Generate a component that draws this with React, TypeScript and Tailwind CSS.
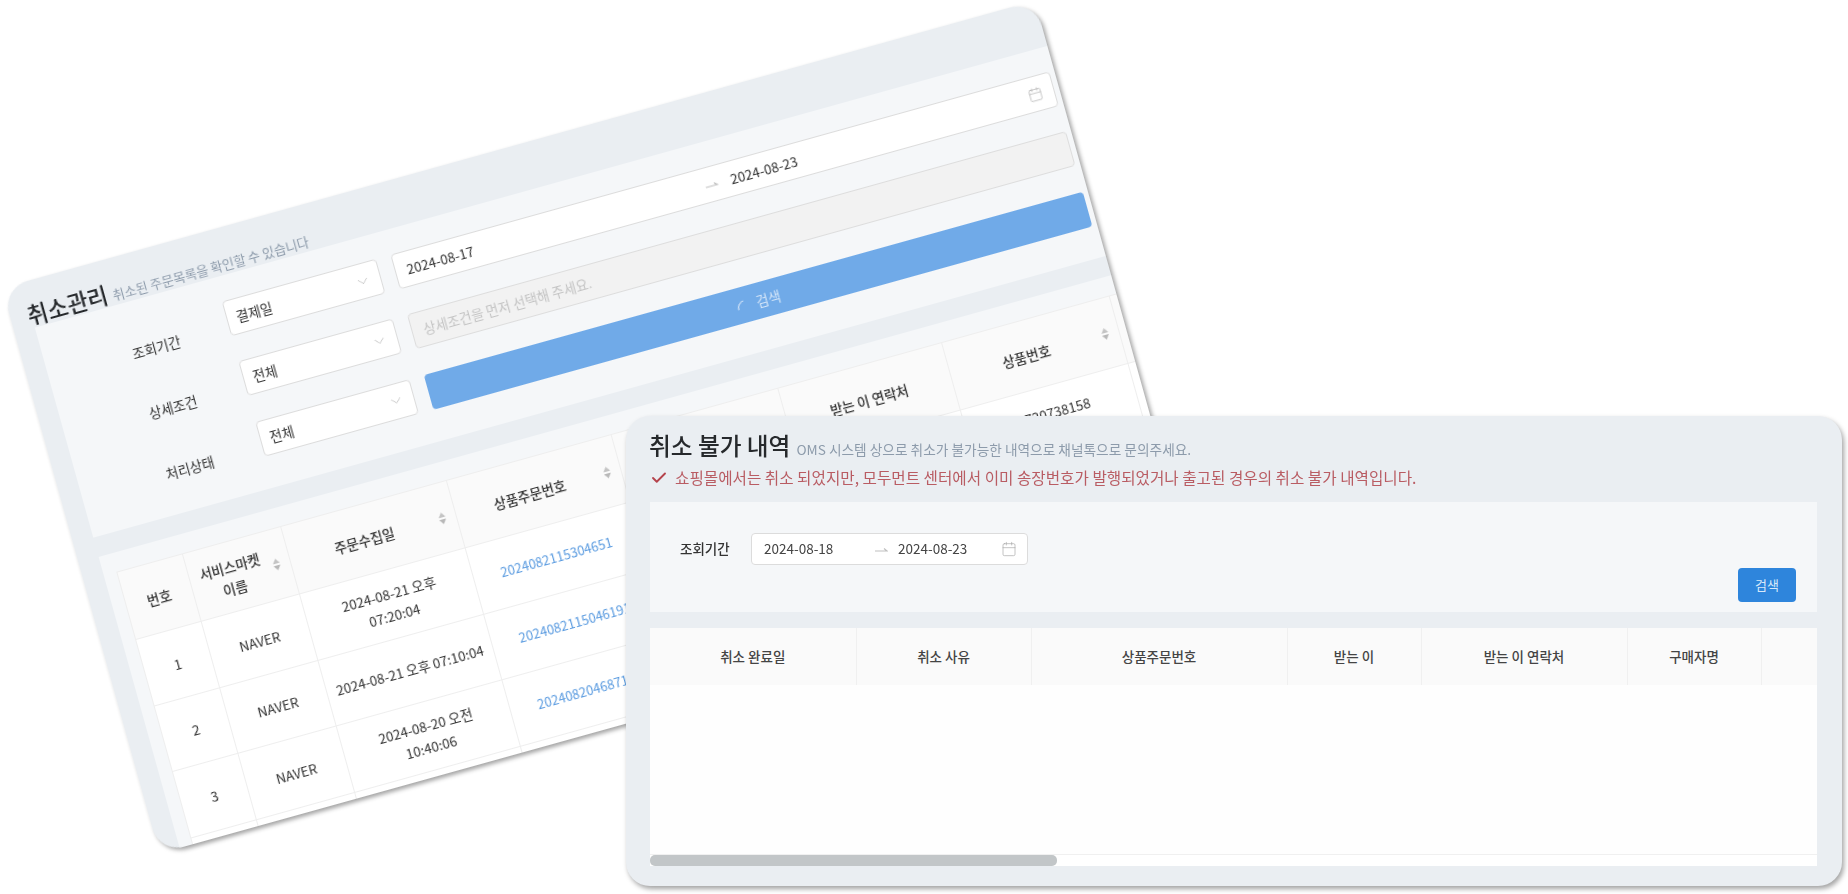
import React from 'react';
import { Calendar, Check, ChevronDown } from 'lucide-react';

const backHeaders = [
  { label: '번호', width: 'w-[68px]', sort: false },
  { label: '서비스마켓\n이름', width: 'w-[102px]', sort: true },
  { label: '주문수집일', width: 'w-[172px]', sort: true },
  { label: '상품주문번호', width: 'w-[171px]', sort: true },
  { label: '받는 이', width: 'w-[173px]', sort: false },
  { label: '받는 이 연락처', width: 'w-[170px]', sort: false },
  { label: '상품번호', width: 'w-[174px]', sort: true },
  { label: '', width: 'w-[120px]', sort: false },
];

const backRows = [
  { no: 1, market: 'NAVER', date: '2024-08-21 오후\n07:20:04', order: '2024082115304651', product: '10720738158' },
  { no: 2, market: 'NAVER', date: '2024-08-21 오후 07:10:04', order: '2024082115046191', product: '' },
  { no: 3, market: 'NAVER', date: '2024-08-20 오전\n10:40:06', order: '2024082046871234', product: '' },
];

const frontHeaders = [
  { label: '취소 완료일', width: 'w-[206px]' },
  { label: '취소 사유', width: 'w-[175px]' },
  { label: '상품주문번호', width: 'w-[256px]' },
  { label: '받는 이', width: 'w-[134px]' },
  { label: '받는 이 연락처', width: 'w-[206px]' },
  { label: '구매자명', width: 'w-[134px]' },
  { label: '', width: 'w-[56px]' },
];

const SwapArrow = () => (
  <svg width="14" height="10" viewBox="0 0 14 10" fill="none" className="shrink-0">
    <path d="M1 7H13L10 4.5" stroke="#bfbfbf" strokeWidth="1.1" />
  </svg>
);

const SortIcon = () => (
  <svg width="9" height="14" viewBox="0 0 9 14" className="absolute right-[9px] top-1/2 -translate-y-1/2">
    <path d="M4.5 1L8 6H1Z" fill="#c4c4c4" />
    <path d="M4.5 13L1 8H8Z" fill="#b8b8b8" />
  </svg>
);

const FilterSelect = ({ value }: { value: string }) => (
  <div className="flex h-[36px] w-[160px] shrink-0 items-center justify-between rounded-[4px] border border-[#dcdcdc] bg-white pl-[9px] pr-[9px] text-[13.5px] text-[#333]">
    <span>{value}</span>
    <ChevronDown size={17} strokeWidth={1} color="#a8a8a8" />
  </div>
);

const FilterRow = ({ label, value, children }: { label: string; value: string; children: React.ReactNode }) => (
  <div className="flex items-center">
    <div className="mt-[16px] w-[187px] shrink-0 pl-[87px] text-[13.5px] text-[#333]">{label}</div>
    <FilterSelect value={value} />
    <div className="ml-[15px] min-w-0 flex-1">{children}</div>
  </div>
);

const BackCard = () => (
  <div className="absolute left-[2px] top-[288px] flex h-[587px] w-[1072px] origin-top-left rotate-[-15.55deg] flex-col overflow-hidden rounded-[26px] bg-[#eaeef2] pl-[21px] shadow-[2px_3px_4px_rgba(0,0,0,0.36)] blur-[0.5px]">
    <div className="flex h-[47px] shrink-0 items-end pb-[1px]">
      <span className="-mb-[3px] -ml-[4px] text-[22.5px] font-medium leading-[32px] text-[#26292c]">취소관리</span>
      <span className="-mb-[3px] ml-[5px] pb-[3px] text-[13px] text-[#8d9bab]">취소된 주문목록을 확인할 수 있습니다</span>
    </div>

    <div className="flex h-[218px] shrink-0 flex-col gap-[26px] bg-[#f5f7f9] pr-[5px] pt-[25px]">
      <FilterRow label="조회기간" value="결제일">
        <div className="flex h-[36px] items-center rounded-[4px] border border-[#dcdcdc] bg-white px-[11px] text-[13.5px] text-[#333]">
          <span className="flex-1">2024-08-17</span>
          <SwapArrow />
          <span className="ml-[13px] flex-1">2024-08-23</span>
          <Calendar size={15} strokeWidth={1} color="#a8a8a8" />
        </div>
      </FilterRow>
      <FilterRow label="상세조건" value="전체">
        <div className="flex h-[36px] items-center rounded-[4px] border border-[#dddddd] bg-[#f2f2f2] px-[11px] text-[13.5px] text-[#c4c4c4]">
          상세조건을 먼저 선택해 주세요.
        </div>
      </FilterRow>
      <FilterRow label="처리상태" value="전체">
        <div className="flex h-[36px] items-center justify-center gap-[9px] rounded-[4px] bg-[#70aae8] text-[13.5px] text-[#d4e5f8]">
          <svg width="12" height="12" viewBox="0 0 12 12" fill="none">
            <path d="M2 10C2 6 4.5 3 8.5 2" stroke="#d4e5f8" strokeWidth="1.2" />
          </svg>
          검색
        </div>
      </FilterRow>
    </div>

    <div className="mt-[20px] min-h-0 flex-1 overflow-hidden bg-[#f5f7f9] pl-[13px] pt-[19px]">
      <table className="w-[1150px] table-fixed border-collapse bg-white text-[13.5px] text-[#333]">
        <thead>
          <tr className="h-[70px] bg-[#fafafa]">
            {backHeaders.map((h, i) => (
              <th key={i} className={`relative border border-[#eeeeee] pl-[4px] text-center text-[13.5px] font-medium leading-[22px] ${h.sort ? 'pr-[22px]' : 'pr-[4px]'} ${h.width}`}>
                <span className="whitespace-pre-line">{h.label}</span>
                {h.sort && <SortIcon />}
              </th>
            ))}
          </tr>
        </thead>
        <tbody>
          {backRows.map((row) => (
            <tr key={row.no} className="h-[68.5px]">
              <td className="border border-[#eeeeee] text-center">{row.no}</td>
              <td className="border border-[#eeeeee] text-center">{row.market}</td>
              <td className="whitespace-pre-line border border-[#eeeeee] text-center leading-[22px]">{row.date}</td>
              <td className="border border-[#eeeeee] pb-[3px] text-center text-[13px] text-[#5a9be0]">{row.order}</td>
              <td className="border border-[#eeeeee]"></td>
              <td className="border border-[#eeeeee]"></td>
              <td className="border border-[#eeeeee] pb-[16px] pr-[2px] text-center">{row.product}</td>
              <td className="border border-[#eeeeee]"></td>
            </tr>
          ))}
          <tr className="h-[30px]">
            {backHeaders.map((h, i) => (
              <td key={i} className="border border-[#eeeeee]"></td>
            ))}
          </tr>
        </tbody>
      </table>
    </div>
  </div>
);

const FrontCard = () => (
  <div className="absolute left-[626px] top-[416px] flex h-[470px] w-[1216px] flex-col overflow-hidden rounded-[24px] bg-[#eaeef2] pl-[24px] pr-[25px] shadow-[2px_3px_5px_rgba(0,0,0,0.36)] blur-[0.5px]">
    <div className="flex h-[86px] shrink-0 flex-col pt-[12px]">
      <div className="flex items-baseline">
        <span className="-ml-[1px] text-[23.7px] font-medium leading-[34px] text-[#26292c]">취소 불가 내역</span>
        <span className="ml-[6px] text-[13.7px] text-[#8d9bab]">OMS 시스템 상으로 취소가 불가능한 내역으로 채널톡으로 문의주세요.</span>
      </div>
      <div className="mt-[4px] flex items-center text-[15.65px] leading-[24px] text-[#b95c63]">
        <Check size={18} strokeWidth={2.5} color="#b5434c" className="mr-[7px]" />
        쇼핑몰에서는 취소 되었지만, 모두먼트 센터에서 이미 송장번호가 발행되었거나 출고된 경우의 취소 불가 내역입니다.
      </div>
    </div>

    <div className="flex h-[110px] shrink-0 flex-col bg-[#f5f7f9] pl-[30px] pr-[21px] pt-[31px]">
      <div className="flex items-center">
        <span className="w-[71px] pb-[2px] text-[13.5px] font-medium text-[#333]">조회기간</span>
        <div className="flex h-[32px] w-[277px] items-center rounded-[4px] border border-[#dcdcdc] bg-white pl-[12px] pr-[10px] text-[13.5px] text-[#444]">
          <span className="w-[110px] pb-[2px]">2024-08-18</span>
          <SwapArrow />
          <span className="ml-[10px] flex-1 pb-[2px]">2024-08-23</span>
          <Calendar size={16} strokeWidth={1} color="#a8a8a8" />
        </div>
      </div>
      <button className="mt-[3px] h-[34px] w-[58px] self-end rounded-[4px] bg-[#2e85dc] text-[13px] text-[#d8e9fa]">검색</button>
    </div>

    <table className="mt-[16px] w-[1167px] shrink-0 table-fixed border-collapse">
      <thead>
        <tr className="h-[57px] bg-[#fafafa]">
          {frontHeaders.map((h, i) => (
            <th key={i} className={`border-r border-[#f0f0f0] text-center text-[13.5px] font-medium text-[#444] last:border-r-0 ${h.width}`}>
              {h.label}
            </th>
          ))}
        </tr>
      </thead>
    </table>
    <div className="h-[170px] w-[1167px] shrink-0 border-b border-[#f0f0f0] bg-[#fefefe]"></div>
    <div className="h-[11px] w-[1167px] shrink-0 bg-white">
      <div className="h-full w-[407px] rounded-[5px] bg-[#c2c6c8]"></div>
    </div>
  </div>
);

export default function App() {
  return (
    <div className="relative h-[894px] w-full overflow-hidden bg-white font-['Noto_Sans_CJK_KR','Noto_Sans',sans-serif]">
      <BackCard />
      <FrontCard />
    </div>
  );
}
